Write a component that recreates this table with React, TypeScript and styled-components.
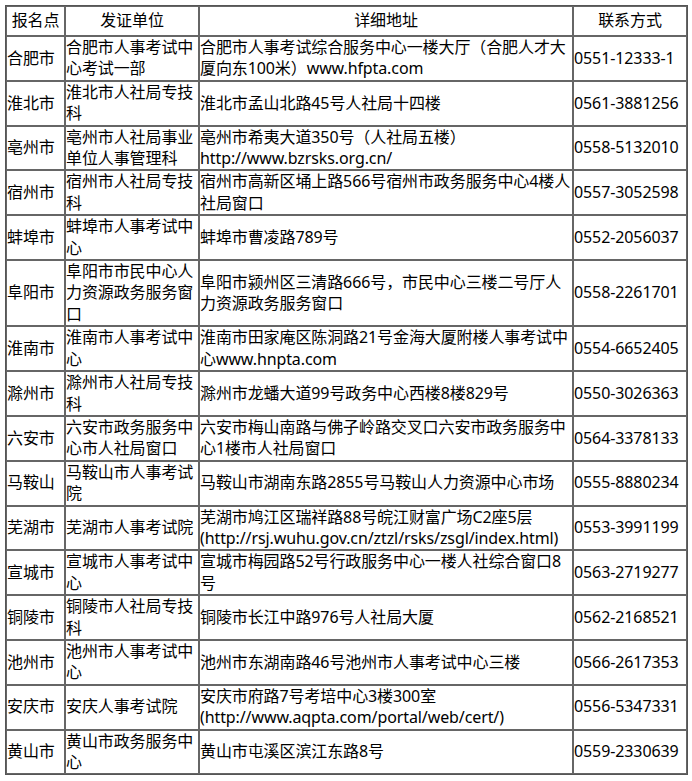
import styled, { createGlobalStyle } from "styled-components";

const GlobalStyle = createGlobalStyle`
  body {
    margin: 0;
    background: #fff;
  }
`;

const Page = styled.div`
  padding: 5px;
  font-family: "Noto Sans", "Noto Sans CJK SC", sans-serif;
  color: #000;
`;

const Table = styled.table`
  width: 683px;
  table-layout: fixed;
  border-collapse: separate;
  border-spacing: 0;
  border: 1px solid #555;
  font-size: 16px;
  line-height: 21.4px;
  letter-spacing: -0.1px;
`;

const HeadCell = styled.th<{ $w: number }>`
  width: ${(p) => p.$w}px;
  box-sizing: border-box;
  height: 30px;
  padding: 0;
  border: 1px solid #666;
  font-weight: normal;
  text-align: center;
  vertical-align: middle;
`;

const Cell = styled.td`
  padding: 0;
  border: 1px solid #666;
  text-align: left;
  vertical-align: middle;
  overflow-wrap: break-word;
`;

interface Item {
  city: string;
  office: string;
  address: string;
  phone: string;
}

const items: Item[] = [
  {
    city: "合肥市",
    office: "合肥市人事考试中心考试一部",
    address: "合肥市人事考试综合服务中心一楼大厅（合肥人才大厦向东100米）www.hfpta.com",
    phone: "0551-12333-1",
  },
  { city: "淮北市", office: "淮北市人社局专技科", address: "淮北市孟山北路45号人社局十四楼", phone: "0561-3881256" },
  {
    city: "亳州市",
    office: "亳州市人社局事业单位人事管理科",
    address: "亳州市希夷大道350号（人社局五楼）http://www.bzrsks.org.cn/",
    phone: "0558-5132010",
  },
  {
    city: "宿州市",
    office: "宿州市人社局专技科",
    address: "宿州市高新区埇上路566号宿州市政务服务中心4楼人社局窗口",
    phone: "0557-3052598",
  },
  { city: "蚌埠市", office: "蚌埠市人事考试中心", address: "蚌埠市曹凌路789号", phone: "0552-2056037" },
  {
    city: "阜阳市",
    office: "阜阳市市民中心人力资源政务服务窗口",
    address: "阜阳市颍州区三清路666号，市民中心三楼二号厅人力资源政务服务窗口",
    phone: "0558-2261701",
  },
  {
    city: "淮南市",
    office: "淮南市人事考试中心",
    address: "淮南市田家庵区陈洞路21号金海大厦附楼人事考试中心www.hnpta.com",
    phone: "0554-6652405",
  },
  { city: "滁州市", office: "滁州市人社局专技科", address: "滁州市龙蟠大道99号政务中心西楼8楼829号", phone: "0550-3026363" },
  {
    city: "六安市",
    office: "六安市政务服务中心市人社局窗口",
    address: "六安市梅山南路与佛子岭路交叉口六安市政务服务中心1楼市人社局窗口",
    phone: "0564-3378133",
  },
  {
    city: "马鞍山",
    office: "马鞍山市人事考试院",
    address: "马鞍山市湖南东路2855号马鞍山人力资源中心市场",
    phone: "0555-8880234",
  },
  {
    city: "芜湖市",
    office: "芜湖市人事考试院",
    address: "芜湖市鸠江区瑞祥路88号皖江财富广场C2座5层(http://rsj.wuhu.gov.cn/ztzl/rsks/zsgl/index.html)",
    phone: "0553-3991199",
  },
  {
    city: "宣城市",
    office: "宣城市人事考试中心",
    address: "宣城市梅园路52号行政服务中心一楼人社综合窗口8号",
    phone: "0563-2719277",
  },
  { city: "铜陵市", office: "铜陵市人社局专技科", address: "铜陵市长江中路976号人社局大厦", phone: "0562-2168521" },
  { city: "池州市", office: "池州市人事考试中心", address: "池州市东湖南路46号池州市人事考试中心三楼", phone: "0566-2617353" },
  {
    city: "安庆市",
    office: "安庆人事考试院",
    address: "安庆市府路7号考培中心3楼300室(http://www.aqpta.com/portal/web/cert/)",
    phone: "0556-5347331",
  },
  { city: "黄山市", office: "黄山市政务服务中心", address: "黄山市屯溪区滨江东路8号", phone: "0559-2330639" },
];

export default function App() {
  return (
    <Page>
      <GlobalStyle />
      <Table>
        <thead>
          <tr>
            <HeadCell $w={59}>报名点</HeadCell>
            <HeadCell $w={134}>发证单位</HeadCell>
            <HeadCell $w={374}>详细地址</HeadCell>
            <HeadCell $w={114}>联系方式</HeadCell>
          </tr>
        </thead>
        <tbody>
          {items.map((item) => (
            <tr key={item.city}>
              <Cell>{item.city}</Cell>
              <Cell>{item.office}</Cell>
              <Cell>{item.address}</Cell>
              <Cell>{item.phone}</Cell>
            </tr>
          ))}
        </tbody>
      </Table>
    </Page>
  );
}
